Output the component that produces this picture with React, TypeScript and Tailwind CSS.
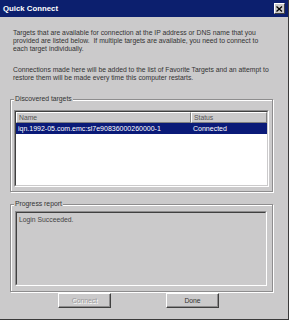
const font = { fontFamily: '"Liberation Sans", Arial, sans-serif' }

function GroupBox({ label, className, children }: { label: string; className?: string; children: React.ReactNode }) {
  return (
    <div className={`relative border border-[#8e8d8e] shadow-[1px_1px_0_#ffffff,inset_1px_1px_0_#ffffff] ${className ?? ''}`}>
      <span className="absolute left-[3px] top-[-5px] bg-[#cbcacb] px-[1px] text-[6.8px] leading-[8px] text-[#333]">{label}</span>
      {children}
    </div>
  )
}

function Button({ label, disabled }: { label: string; disabled?: boolean }) {
  return (
    <div className="w-[53px] h-[15px] bg-[#cbcacb] border border-t-white border-l-white border-r-[#404040] border-b-[#404040] shadow-[inset_-1px_-1px_0_#8e8d8e] flex items-center justify-center">
      <span className={`text-[6.8px] leading-[8px] ${disabled ? 'text-[#9a999a] [text-shadow:1px_1px_0_#fff]' : 'text-[#333]'}`}>{label}</span>
    </div>
  )
}

export default function App() {
  return (
    <div style={font} className="w-[289px] h-[320px] bg-[#cbcacb] border-r border-b border-[#3a3a3a] flex flex-col overflow-hidden">
      <div className="h-[17px] bg-[#0c1f6e] flex items-center justify-between pl-[3px] pr-[3px]">
        <span className="text-white font-bold text-[7.8px]">Quick Connect</span>
        <div className="w-[11px] h-[11px] bg-[#cbcacb] border border-t-white border-l-white border-r-[#404040] border-b-[#404040] flex items-center justify-center">
          <svg width="7" height="6" viewBox="0 0 7 6">
            <path d="M0.5 0.5 L6 5.5 M6 0.5 L0.5 5.5" stroke="#000" strokeWidth="1.3" />
          </svg>
        </div>
      </div>

      <div className="flex-1 flex flex-col px-[10px] pt-[12px] text-[#333]">
        <p className="text-[6.8px] leading-[8px] pl-[3px] pr-[10px]">
          Targets that are available for connection at the IP address or DNS name that you provided are listed below.&nbsp; If multiple targets are available, you need to connect to each target individually.
        </p>
        <p className="text-[6.8px] leading-[8px] pl-[3px] pr-[6px] mt-[13px]">
          Connections made here will be added to the list of Favorite Targets and an attempt to restore them will be made every time this computer restarts.
        </p>

        <GroupBox label="Discovered targets" className="mt-[17px] h-[93px] w-[263px] px-[3px] pt-[10px] pb-[4px]">
          <div className="h-full border border-t-[#8e8d8e] border-l-[#8e8d8e] border-r-white border-b-white">
            <div className="h-full bg-white border border-t-[#404040] border-l-[#404040] border-r-[#cbcacb] border-b-[#cbcacb] flex flex-col">
              <div className="flex h-[11px] text-[6.8px] text-[#555]">
                <div className="w-[175px] bg-[#cbcacb] border border-t-white border-l-white border-r-[#808080] border-b-[#808080] pl-[2px] leading-[9px]">Name</div>
                <div className="w-[76px] bg-[#cbcacb] border border-t-white border-l-white border-r-[#808080] border-b-[#808080] pl-[2px] leading-[9px]">Status</div>
              </div>
              <div className="flex h-[11px] bg-[#0a1a78] text-white text-[7px] leading-[11px]">
                <div className="w-[175px] pl-[2px]">iqn.1992-05.com.emc:sl7e90836000260000-1</div>
                <div className="w-[76px] pl-[2px]">Connected</div>
              </div>
            </div>
          </div>
        </GroupBox>

        <GroupBox label="Progress report" className="mt-[12px] h-[88px] w-[263px] pl-[4px] pr-[5px] pt-[6px] pb-[5px]">
          <div className="h-full border border-t-[#8e8d8e] border-l-[#8e8d8e] border-r-white border-b-white">
            <div className="h-full border border-t-[#404040] border-l-[#404040] border-r-[#cbcacb] border-b-[#cbcacb] px-[2px] pt-[3px]">
              <div className="text-[6.8px] leading-[8px] text-[#444]">Login Succeeded.</div>
            </div>
          </div>
        </GroupBox>

        <div className="flex gap-[55px] pl-[48px] mt-[1px]">
          <Button label="Connect" disabled />
          <Button label="Done" />
        </div>
      </div>
    </div>
  )
}
